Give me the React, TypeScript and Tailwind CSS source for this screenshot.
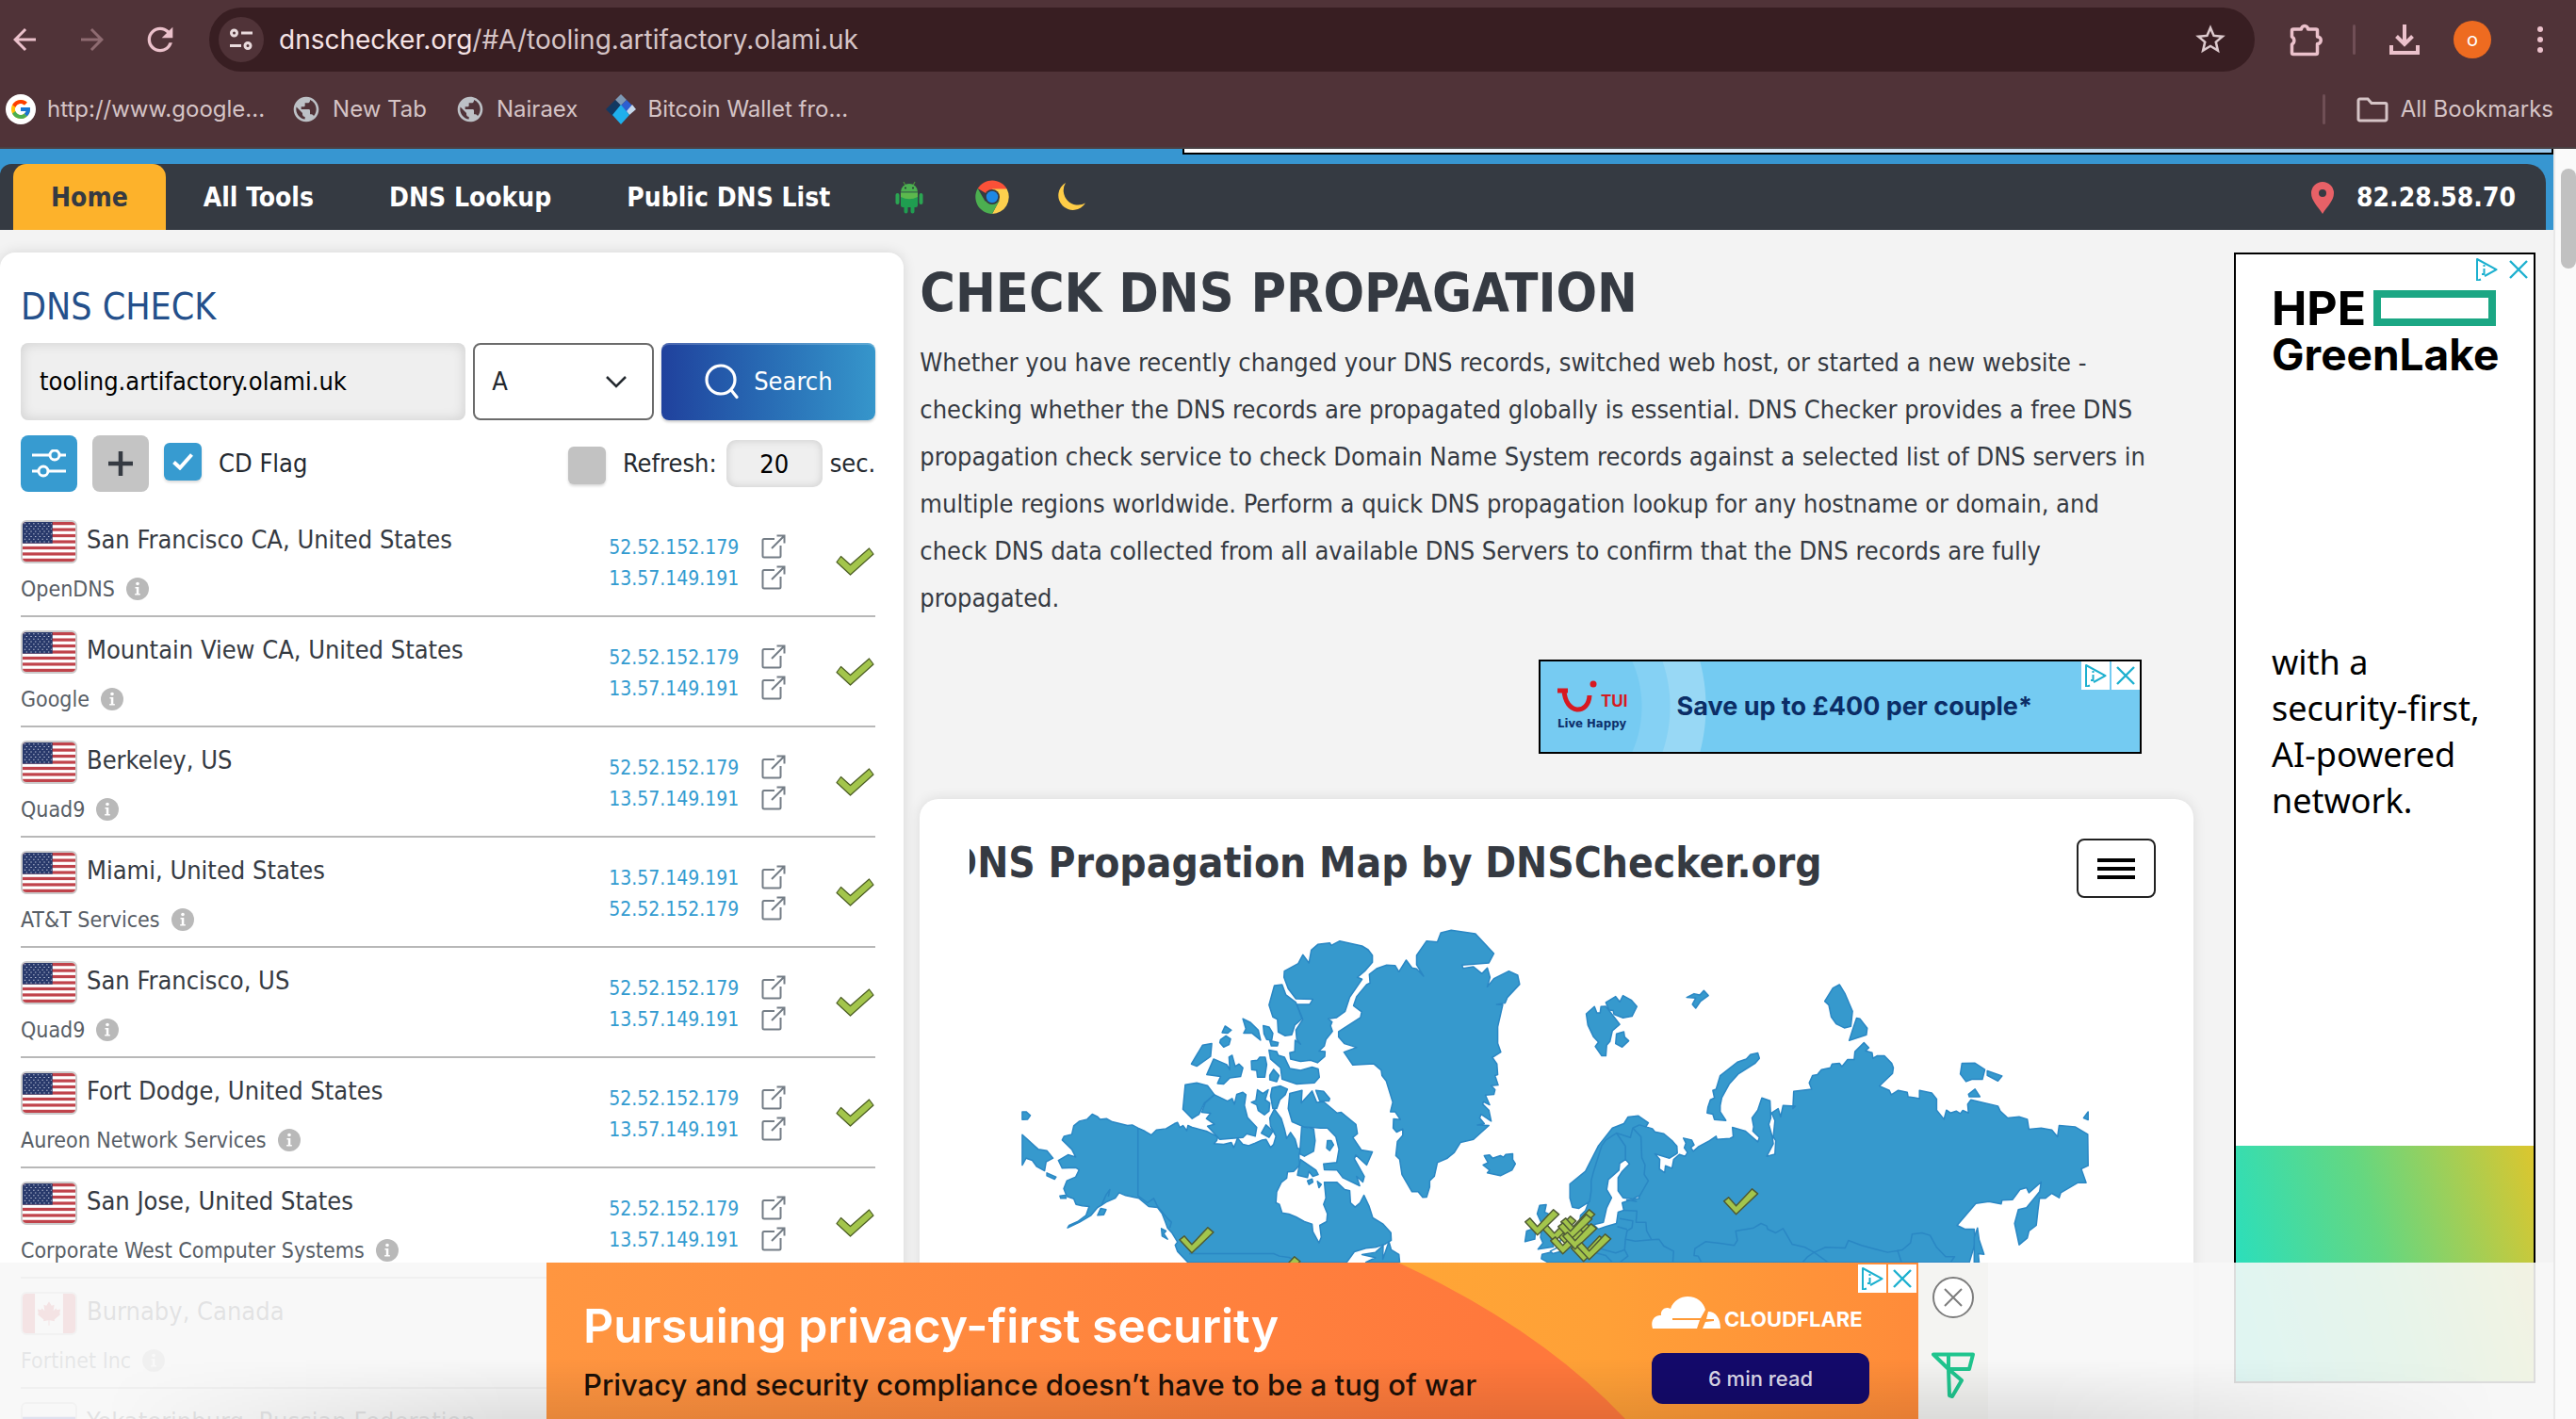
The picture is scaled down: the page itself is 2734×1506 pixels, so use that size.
import type { ReactNode } from 'react'
import { FcGoogle } from 'react-icons/fc'
import { MdArrowBack, MdArrowForward, MdPublic, MdRefresh, MdStarBorder } from 'react-icons/md'

/* ---------- shared icons ---------- */

function CheckMark() {
  return (
    <svg viewBox="-1 -1 43 32" className="h-8 w-[43px]" aria-label="Resolved">
      <path d="M1 15.5 5.5 9.5 15.5 18.5 35.5 1 40 7 15.5 29Z" fill="#a3c54c" stroke="#4b5d23" strokeWidth="1.2" strokeLinejoin="round" />
    </svg>
  )
}

function ExternalIcon() {
  return (
    <svg viewBox="0 0 26 26" className="size-[26px]" fill="none" stroke="#747d86" strokeWidth="2">
      <path d="M14 5H3a1.5 1.5 0 0 0-1.500 1.500V23A1.500 1.500 0 0 0 3 24.500h16A1.500 1.500 0 0 0 20.500 23V12" />
      <path d="M11 15 24.500 1.500M16.500 1.500h8v8" />
    </svg>
  )
}

function InfoIcon() {
  return (
    <svg viewBox="0 0 24 24" className="size-6">
      <circle cx="12" cy="12" r="12" fill="#b9b9b9" />
      <circle cx="12" cy="6.500" r="1.800" fill="#fff" />
      <path d="M9.500 10h3.800v7h1.500v1.500h-5.600V17h1.600v-5.500H9.500Z" fill="#fff" />
    </svg>
  )
}

function AdChoices({ boxed = false }: { boxed?: boolean }) {
  const box = boxed ? 'flex size-[30px] items-center justify-center bg-white' : 'flex size-8 items-center justify-center'
  return (
    <div className="flex gap-0.5">
      <button aria-label="Ad choices" className={box}>
        <svg viewBox="0 0 24 24" className="size-6" fill="none" stroke="#1cb0cf" strokeWidth="2" strokeLinejoin="round">
          <path d="M6 22.500 2 24V1l20.500 11.200L10 19" />
          <path d="M9.500 7v2M9.500 11v6H7" />
        </svg>
      </button>
      <button aria-label="Close ad" className={box}>
        <svg viewBox="0 0 20 20" className="size-5" stroke="#1cb0cf" strokeWidth="2.400">
          <path d="M1 1 19 19M19 1 1 19" />
        </svg>
      </button>
    </div>
  )
}

/* ---------- browser window ---------- */

function Bookmark({ icon, children }: { icon: ReactNode; children: ReactNode }) {
  return (
    <button className="flex items-center gap-3">
      {icon}
      <span>{children}</span>
    </button>
  )
}

function BrowserBar() {
  return (
    <header className="shrink-0 border-b-2 border-[#4a4043] bg-[#503338] font-['Inter',sans-serif] text-[#d5c4c6]">
      <div className="flex h-[84px] items-center pr-[26px] pl-2">
        <button aria-label="Back" className="text-[#ebc1cb]"><MdArrowBack className="size-9" /></button>
        <button aria-label="Forward" className="ml-9 text-[#8e6b71]"><MdArrowForward className="size-9" /></button>
        <button aria-label="Reload" className="ml-[34px] text-[#ebc1cb]"><MdRefresh className="size-10" /></button>
        <div className="ml-8 flex h-[68px] flex-1 items-center rounded-full bg-[#381e22] pr-7">
          <button aria-label="Site information" className="ml-2.5 flex size-12 items-center justify-center rounded-full bg-[#503338]">
            <svg viewBox="0 0 24 24" className="size-6" fill="none" stroke="#e8dadc" strokeWidth="3">
              <circle cx="4.500" cy="5" r="3" /><path d="M12 5h12M0 18.500h12" /><circle cx="19" cy="18.500" r="3" />
            </svg>
          </button>
          <p className="ml-4 flex-1 text-[28px]">
            <span className="text-[#f5e3e5]">dnschecker.org</span>/#A/tooling.artifactory.olami.uk
          </p>
          <button aria-label="Bookmark this page"><MdStarBorder className="size-[38px] text-[#dccacd]" /></button>
        </div>
        <button aria-label="Extensions" className="ml-9">
          <svg viewBox="0 0 36 36" className="size-9" fill="none" stroke="#ebc1cb" strokeWidth="3.500" strokeLinejoin="round">
            <path d="M5 7h8.500a3.500 3.500 0 0 1 7 0H29a1.500 1.500 0 0 1 1.500 1.500V15a3.500 3.500 0 0 1 0 7.500V32a1.500 1.500 0 0 1-1.500 1.500H5A1.500 1.500 0 0 1 3.500 32v-9a4.600 4.600 0 0 0 0-8V8.500A1.500 1.500 0 0 1 5 7Z" />
          </svg>
        </button>
        <span className="ml-8 h-8 w-[3px] rounded bg-[#704f56]" />
        <button aria-label="Downloads" className="ml-9">
          <svg viewBox="0 0 32 32" className="size-8" fill="none" stroke="#ebc1cb" strokeWidth="4">
            <path d="M16 0v20M7.500 12.500 16 21l8.500-8.500M2 22v8h28v-8" />
          </svg>
        </button>
        <button aria-label="Profile" className="ml-9 flex size-10 items-center justify-center rounded-full bg-[#ee6b20] text-xl text-white">o</button>
        <button aria-label="Menu" className="ml-10">
          <svg viewBox="0 0 24 32" className="h-8 w-6" fill="#ebc1cb">
            <circle cx="12" cy="5" r="3" /><circle cx="12" cy="16" r="3" /><circle cx="12" cy="27" r="3" />
          </svg>
        </button>
      </div>
      <nav aria-label="Bookmarks" className="flex h-[72px] items-start pt-4 pr-6 pl-1.5 text-2xl leading-8">
        <Bookmark icon={<span className="flex size-8 items-center justify-center rounded-full bg-white"><FcGoogle className="size-6" /></span>}>http://www.google...</Bookmark>
        <span className="w-7" />
        <Bookmark icon={<MdPublic className="size-8 text-[#bdc1c6]" />}>New Tab</Bookmark>
        <span className="w-[30px]" />
        <Bookmark icon={<MdPublic className="size-8 text-[#bdc1c6]" />}>Nairaex</Bookmark>
        <span className="w-[30px]" />
        <Bookmark
          icon={
            <svg viewBox="0 0 32 32" className="size-8">
              <path d="M16 0 22 6 16 12 10 6Z" fill="#7d99b5" />
              <path d="M10 6 16 12 8 24 0 16Z" fill="#123962" />
              <path d="M22 6 28 12 23 20 16 12Z" fill="#2d5fd0" />
              <path d="M28 11 32 16 25 22 22 18Z" fill="#c5d8ec" />
              <path d="M16 11 25 22 16 32 7 22Z" fill="#1fb0ec" />
            </svg>
          }
        >
          Bitcoin Wallet fro...
        </Bookmark>
        <span className="ml-auto h-8 w-[3px] rounded bg-[#6f4f55]" />
        <span className="w-8" />
        <Bookmark
          icon={
            <svg viewBox="0 0 36 32" className="h-8 w-9" fill="none" stroke="#d5c4c6" strokeWidth="3">
              <path d="M4.500 5H13l4 4.500h14.500a1.500 1.500 0 0 1 1.500 1.500v15.500a1.500 1.500 0 0 1-1.500 1.500h-27A1.500 1.500 0 0 1 3 26.500v-20A1.500 1.500 0 0 1 4.500 5Z" />
            </svg>
          }
        >
          All Bookmarks
        </Bookmark>
      </nav>
    </header>
  )
}

/* ---------- site header ---------- */

function AndroidIcon() {
  return (
    <svg viewBox="0 0 36 36" className="size-9">
      <path d="M12 2 14 6M24 2 22 6" stroke="#4b8f3c" strokeWidth="1.200" />
      <path d="M9 12.500a9 8.500 0 0 1 18 0Z" fill="#4caf50" />
      <circle cx="14" cy="8.500" r="1" fill="#263238" /><circle cx="22" cy="8.500" r="1" fill="#263238" />
      <rect x="3.500" y="14" width="4" height="12" rx="2" fill="#2ba552" />
      <rect x="28.500" y="14" width="4" height="12" rx="2" fill="#2ba552" />
      <path d="M9 13.500h18V27a2 2 0 0 1-2 2h-1.500v4.500a2 2 0 0 1-4 0V29h-3v4.500a2 2 0 0 1-4 0V29H11a2 2 0 0 1-2-2Z" fill="#1f9d50" />
      <path d="M9 13.500h18V18q-9 4.500-18 0Z" fill="#5cb84d" />
    </svg>
  )
}

function ChromeIcon() {
  return (
    <svg viewBox="0 0 36 36" className="size-9">
      <path d="M18 18 2.700 9A18 18 0 0 1 33.600 9.500Z" fill="#fb5138" />
      <path d="M18 9.500h15.600A18 18 0 0 1 18 36l7.500-14Z" fill="#fdd04e" />
      <path d="M2.700 9 10.500 22.500 25.500 22 18 36A18 18 0 0 1 2.700 9Z" fill="#4caf50" />
      <circle cx="18" cy="18" r="8" fill="#353a42" />
      <circle cx="18" cy="18" r="6.200" fill="#1e88e5" />
    </svg>
  )
}

function SiteNav() {
  const link = 'flex items-center px-10 pt-0.5'
  return (
    <div className="shrink-0 bg-[#3796d1]">
      <div className="flex h-4 justify-end">
        <div className="h-1.5 w-[1455px] border-x-2 border-b-2 border-black bg-linear-to-r from-white to-[#9cc9ec]" />
      </div>
      <nav className="mr-2 flex h-[70px] items-stretch rounded-tl-xl rounded-tr-[20px] bg-[#353a42] pl-3.5 text-[28px] font-bold text-white">
        <a href="#home" className="flex items-center rounded-t-[14px] bg-[#fdb22b] px-10 pt-0.5 text-[#353a42]">Home</a>
        <a href="#tools" className={link}>All Tools</a>
        <a href="#lookup" className={link}>DNS Lookup</a>
        <a href="#list" className={link}>Public DNS List</a>
        <a href="#android" aria-label="Android app" className="ml-[26px] flex items-center"><AndroidIcon /></a>
        <a href="#chrome" aria-label="Chrome extension" className="ml-[52px] flex items-center"><ChromeIcon /></a>
        <button aria-label="Dark mode" className="ml-[50px]">
          <svg viewBox="0 0 32 32" className="size-8"><path d="M10 1A15.500 15.500 0 1 0 31 22.500 15.500 15.500 0 0 1 10 1Z" fill="#ffcd47" /></svg>
        </button>
        <a href="#ip" className="mr-8 ml-auto flex items-center gap-6 pt-0.5">
          <svg viewBox="0 0 24 34" className="h-[34px] w-6"><path fillRule="evenodd" d="M12 0a12 12 0 0 1 12 12c0 8-7 14-12 22C7 26 0 20 0 12A12 12 0 0 1 12 0Zm0 8a4 4 0 1 0 0 8 4 4 0 0 0 0-8Z" fill="#e86167" /></svg>
          82.28.58.70
        </a>
      </nav>
    </div>
  )
}

/* ---------- DNS check panel ---------- */

type Server = { place: string; provider: string; ips: string[]; flag: 'us' | 'ca' | 'ru' }

const A = '52.52.152.179'
const B = '13.57.149.191'
const servers: Server[] = [
  { place: 'San Francisco CA, United States', provider: 'OpenDNS', ips: [A, B], flag: 'us' },
  { place: 'Mountain View CA, United States', provider: 'Google', ips: [A, B], flag: 'us' },
  { place: 'Berkeley, US', provider: 'Quad9', ips: [A, B], flag: 'us' },
  { place: 'Miami, United States', provider: 'AT&T Services', ips: [B, A], flag: 'us' },
  { place: 'San Francisco, US', provider: 'Quad9', ips: [A, B], flag: 'us' },
  { place: 'Fort Dodge, United States', provider: 'Aureon Network Services', ips: [A, B], flag: 'us' },
  { place: 'San Jose, United States', provider: 'Corporate West Computer Systems', ips: [A, B], flag: 'us' },
  { place: 'Burnaby, Canada', provider: 'Fortinet Inc', ips: [], flag: 'ca' },
  { place: 'Yekaterinburg, Russian Federation', provider: '', ips: [], flag: 'ru' },
]

const stripes = [0, 1, 2, 3, 4, 5, 6]
const starRows = [0, 1, 2, 3, 4, 5, 6, 7]

function Flag({ country }: { country: Server['flag'] }) {
  return (
    <svg viewBox="0 0 60 46" className="h-[46px] w-[60px] rounded-md border-2 border-[#cbcbcb] bg-white" preserveAspectRatio="none">
      {country === 'us' && (
        <>
          {stripes.map((i) => <rect key={i} x="0" y={i * 7.08} width="60" height="3.540" fill="#c0434b" />)}
          <rect width="34" height="24.800" fill="#28396b" />
          {starRows.map((r) => (
            <path key={r} d={`M${r % 2 ? 4 : 2} ${2 + r * 3}H33`} stroke="#c9cfe0" strokeWidth="1.200" strokeDasharray="1.400 3.600" />
          ))}
        </>
      )}
      {country === 'ca' && (
        <>
          <rect width="14" height="46" fill="#d9434b" /><rect x="46" width="14" height="46" fill="#d9434b" />
          <path d="M30 9l3 5 3-1-1 7 3-3 1 2 4-1-1 5 1 1-7 6 .500 2-6-1v6h-1v-6l-6 1 .500-2-7-6 1-1-1-5 4 1 1-2 3 3-1-7 3 1Z" fill="#d9434b" />
        </>
      )}
      {country === 'ru' && (
        <>
          <rect y="15" width="60" height="16" fill="#2a46b0" /><rect y="31" width="60" height="15" fill="#c8372d" />
        </>
      )}
    </svg>
  )
}

function ServerRow({ server }: { server: Server }) {
  const cell = 'h-[117px] border-b-2 border-[#b8b8b8] p-0 align-top'
  return (
    <tr>
      <td className="h-[117px] w-full border-b-2 border-[#b8b8b8] p-0 align-top">
        <div className="flex gap-2.5 pt-3.5">
          <Flag country={server.flag} />
          <span className="text-[27px] leading-[42px] whitespace-nowrap text-[#353a42]">{server.place}</span>
        </div>
        {server.provider && (
          <div className="mt-3 flex items-center gap-3 text-[23px] leading-[30px] text-[#585e66]">
            {server.provider}
            <InfoIcon />
          </div>
        )}
      </td>
      <td className={cell}>
        <ul className="flex w-[190px] flex-col pt-[27px]">
          {server.ips.map((ip) => (
            <li key={ip} className="flex h-[33px] items-center justify-end gap-6 text-[21px]">
              <a href={`#${ip}`} className="text-[#339bd0]">{ip}</a>
              <a href={`#open-${ip}`} aria-label={`Open ${ip}`} className="pb-1"><ExternalIcon /></a>
            </li>
          ))}
        </ul>
      </td>
      <td className={cell}>
        <div className="flex w-[95px] justify-end pt-[42px]">{server.ips.length > 0 && <CheckMark />}</div>
      </td>
    </tr>
  )
}

function CheckPanel() {
  return (
    <section className="w-[35.4%] shrink-0 rounded-t-2xl bg-white pt-8 pr-[30px] pl-[22px] shadow-[0_0_14px_rgba(0,0,0,0.12)]">
      <h2 className="text-[39px] leading-[52px] text-[#24508b]">DNS CHECK</h2>
      <form className="mt-3 flex h-[82px] gap-2 text-[27px]" onSubmit={(e) => e.preventDefault()}>
        <input aria-label="Domain" defaultValue="tooling.artifactory.olami.uk" className="min-w-0 flex-1 rounded-lg bg-[#efefef] px-5 text-black shadow-[inset_0_0_14px_rgba(0,0,0,0.14)]" />
        <div className="relative w-48">
          <select aria-label="Record type" className="size-full appearance-none rounded-lg border-2 border-[#6b6b6b] bg-white pl-[18px] text-[#24292f]">
            <option>A</option>
            <option>AAAA</option>
            <option>CNAME</option>
            <option>MX</option>
          </select>
          <svg viewBox="0 0 24 14" className="pointer-events-none absolute top-[34px] right-[28px] h-3.5 w-6" fill="none" stroke="#24292f" strokeWidth="2.500"><path d="M2 2 12 12 22 2" /></svg>
        </div>
        <button className="flex w-[227px] items-center justify-center gap-4 rounded-lg bg-linear-to-r from-[#20419d] to-[#3696cb] text-white shadow-[inset_0_2px_0_rgba(255,255,255,0.200),0_2px_3px_rgba(0,0,0,0.200)]">
          <svg viewBox="0 0 36 38" className="h-[38px] w-9" fill="none" stroke="#fff" strokeWidth="3.200" strokeLinecap="round"><circle cx="17" cy="17" r="15" /><path d="M28 28 34 35.500" /></svg>
          Search
        </button>
      </form>
      <div className="mt-4 flex h-[60px] items-center text-[27px] text-[#24292f]">
        <button aria-label="Filters" className="flex size-[60px] items-center justify-center rounded-lg bg-[#379bd0]">
          <svg viewBox="0 0 36 30" className="h-[30px] w-9" fill="none" stroke="#fff" strokeWidth="3"><path d="M0 6h18M30 6h6M0 23h6M18 23h18" /><circle cx="24" cy="6" r="5" /><circle cx="12" cy="23" r="5" /></svg>
        </button>
        <button aria-label="Add server" className="ml-4 flex size-[60px] items-center justify-center rounded-lg bg-[#c4c4c4]">
          <svg viewBox="0 0 26 26" className="size-[26px]" stroke="#353a42" strokeWidth="4.500"><path d="M13 0v26M0 13h26" /></svg>
        </button>
        <label className="ml-4 flex items-center gap-[18px]">
          <span className="relative mb-1 flex size-10">
            <input type="checkbox" defaultChecked className="size-10 appearance-none rounded-md bg-[#379bd0] shadow-[0_2px_3px_rgba(0,0,0,0.150)]" />
            <svg viewBox="0 0 22 18" className="pointer-events-none absolute top-[11px] left-[9px] h-[18px] w-[22px]" fill="none" stroke="#fff" strokeWidth="4"><path d="M1.500 9.500 8 15.500 20.500 1.500" /></svg>
          </span>
          CD Flag
        </label>
        <label className="ml-auto flex items-center gap-[18px]">
          <input type="checkbox" className="mt-1 size-10 appearance-none rounded-md bg-[#c2c2c2] shadow-[0_2px_3px_rgba(0,0,0,0.150)]" />
          Refresh:
        </label>
        <input aria-label="Refresh seconds" defaultValue="20" className="ml-2.5 h-[50px] w-[102px] rounded-[10px] bg-[#efefef] text-center text-black shadow-[inset_0_0_10px_rgba(0,0,0,0.150)]" />
        <span className="ml-2">sec.</span>
      </div>
      <table className="mt-4 w-full border-separate border-spacing-0">
        <tbody>
          {servers.map((s) => <ServerRow key={s.place} server={s} />)}
        </tbody>
      </table>
    </section>
  )
}

/* ---------- map ---------- */

const west = [
  'M248 668 262 676 268 684 285 682 300 692 340 704 352 702 367 712 385 722 402 734 415 718 440 714 462 698 470 694 476 710 484 704 494 720 497 704 508 710 545 722 562 732 575 740 572 752 565 762 590 764 610 758 616 774 622 758 626 744 640 764 655 768 672 760 690 750 700 748 712 774 720 764 726 738 712 706 710 680 722 652 740 682 748 714 754 745 764 726 776 748 782 776 790 780 786 800 788 830 772 850 756 852 754 872 740 885 728 915 726 950 735 955 742 982 760 986 778 995 800 1010 820 1018 822 1042 838 1078 844 1060 840 1022 858 1010 860 985 850 955 856 935 852 885 885 885 905 908 918 912 920 950 932 964 945 950 955 926 968 960 978 998 1005 1018 1025 1045 1026 1070 1010 1082 985 1092 960 1095 930 1106 910 1140 497 1140 470 1105 464 1085 470 1075 455 1045 444 1030 438 1010 430 985 418 965 395 962 370 936 355 932 335 927 318 918 308 935 284 948 272 958 262 965 245 990 215 1012 184 1030 188 1022 210 1010 232 990 240 962 222 960 206 955 200 937 182 930 174 905 182 880 205 868 214 845 205 838 170 840 160 815 185 797 205 804 195 780 170 750 175 738 195 732 200 705 215 690 235 684Z',
  'M1155 90 1182 82 1245 93 1293 156 1280 186 1210 193 1213 203 1240 198 1262 220 1276 202 1283 232 1276 262 1293 236 1332 212 1355 225 1360 254 1328 296 1322 314 1300 318 1316 320 1303 390 1303 442 1311 470 1289 487 1301 508 1303 542 1296 545 1304 575 1286 577 1296 590 1293 605 1271 607 1282 638 1266 628 1264 636 1280 655 1286 690 1260 668 1256 680 1268 698 1250 702 1280 704 1240 748 1206 758 1190 790 1172 808 1146 822 1138 866 1126 880 1126 900 1118 932 1108 933 1096 915 1080 915 1054 860 1048 812 1038 800 1042 755 1056 735 1056 715 1040 725 1031 712 1032 683 1050 685 1036 660 1024 660 1030 630 1013 562 1002 545 1000 528 980 507 926 511 903 470 936 455 904 443 889 422 889 405 946 360 949 342 928 322 936 293 962 255 971 250 969 222 988 204 1014 193 1036 194 1046 214 1065 177 1080 202 1092 205 1110 228 1092 192 1092 162 1118 116 1146 119Z',
  'M892 116 950 132 966 144 977 162 977 184 957 212 938 232 950 238 918 295 906 340 884 360 862 364 872 374 868 386 873 404 856 430 852 450 838 467 854 468 853 484 834 504 816 496 790 500 764 492 762 472 775 468 776 432 790 445 780 428 778 400 796 366 780 318 814 318 822 302 778 300 758 268 747 232 748 212 784 188 796 160 812 186 818 145 835 127 866 122 870 130Z',
  'M722 258 742 255 752 288 778 312 794 364 775 384 767 415 750 418 732 406 730 366 718 358 708 320Z',
  'M640 364 660 376 680 400 686 432 664 410 642 410 648 396Z',
  'M693 386 708 390 718 410 715 432 702 430 695 412Z',
  'M710 434 732 440 730 450 714 450Z',
  'M594 387 610 400 600 410 586 408Z',
  'M582 430 596 418 608 428 604 446 590 454 580 440Z',
  'M535 448 559 443 556 484 520 515 506 508Z',
  'M564 492 598 510 606 526 604 486 612 480 620 516 630 508 640 520 634 548 606 552 590 572 574 570 582 548 546 542Z',
  'M662 498 678 496 684 486 698 486 702 510 697 550 678 550 676 528 663 526Z',
  'M708 464 728 468 732 480 748 486 762 522 790 528 820 518 836 524 839 550 826 568 780 572 742 556 738 520 712 492Z',
  'M720 525 734 545 728 564 710 558 710 544Z',
  'M490 574 520 568 548 577 566 606 540 632 526 668 508 682 484 652Z',
  'M566 606 580 614 600 626 612 618 618 636 624 605 640 598 648 606 644 640 652 678 676 710 672 738 650 730 640 742 580 748 548 706 566 700 545 682 556 665 533 662 542 632Z',
  'M678 590 692 602 706 590 698 622 710 632 708 658 696 670 680 656 676 638 662 630 674 624Z',
  'M716 584 738 578 756 588 750 606 736 622 728 650 718 650 712 610Z',
  'M762 602 794 592 792 632 820 594 832 630 850 628 885 664 896 662 934 700 938 730 926 742 948 782 977 788 962 830 934 798 930 810 956 866 952 884 936 866 944 896 900 870 885 846 852 845 850 826 884 822 890 780 882 740 860 712 842 712 798 708 768 692 758 650Z',
  'M830 592 850 595 866 618 864 626 840 625Z',
  'M793 708 824 714 828 752 824 786 800 802 788 794Z',
  'M688 728 700 702 718 722 708 742Z',
  'M860 752 870 752 876 766 866 784 858 776Z',
  'M790 812 830 846 836 860 822 866 812 850 808 870 782 862Z',
  'M808 880 820 874 822 884 812 892Z',
  'M834 882 844 892 838 902Z',
  'M66 660 76 660 87 672 80 684 66 685Z',
  'M66 733 108 780 130 784 146 808 128 820 124 848 104 835 92 815 76 808 66 830Z',
  'M130 855 154 868 150 875 130 864Z',
  'M270 968 284 972 278 988 262 990Z',
  'M164 928 178 926 180 936 166 936Z',
  'M428 1032 440 1040 434 1048 444 1066 430 1056Z',
  'M960 1140 985 1125 950 1115 985 1108 1005 1086 1004 1130 1020 1074 1026 1100 1046 1115 1048 1140Z',
  'M1268 800 1282 798 1290 808 1310 800 1318 805 1324 796 1342 794 1342 812 1349 826 1340 846 1310 864 1276 855 1282 846 1265 830 1278 822Z',
]
const westBorders = ['M367 712V928L392 950 408 936 418 962 444 1000 454 1012 450 1030', 'M500 1112H720L735 1120 760 1124 785 1140', 'M272 958 284 925 294 908 290 930']

const east = [
  'M300 677 325 673 350 695 344 708 360 714 366 724 388 730 408 752 420 770 421 792 402 808 366 794 378 812 377 842 390 854 392 832 408 840 412 812 426 796 440 802 446 790 438 775 442 760 436 744 456 750 462 766 454 774 460 786 472 772 500 752 516 738 518 748 550 745 558 740 556 710 588 722 618 756 622 742 606 722 608 708 604 680 618 655 628 616 648 625 650 680 645 700 654 742 656 762 640 802 660 795 662 752 656 740 660 688 652 664 668 650 674 676 680 640 710 642 704 650 706 595 750 588 744 568 752 545 764 542 774 526 796 520 800 508 818 506 824 516 838 494 854 494 856 468 878 440 890 456 882 466 898 472 900 490 910 482 928 482 946 506 950 520 948 538 916 578 940 592 945 606 962 592 984 598 986 612 1014 618 1014 592 1044 600 1056 620 1056 655 1074 684 1080 655 1090 664 1104 658 1114 666 1120 656 1134 664 1132 636 1140 622 1206 642 1212 658 1230 680 1258 676 1278 684 1282 716 1312 712 1338 718 1352 740 1356 704 1395 708 1426 732 1427 832 1410 842 1422 886 1402 886 1360 918 1356 934 1338 920 1322 936 1308 935 1304 975 1300 1022 1282 1040 1278 1062 1258 1084 1247 1016 1256 972 1276 966 1308 915 1312 884 1282 918 1276 902 1260 908 1242 940 1216 942 1214 954 1184 946 1152 952 1106 1022 1125 1034 1148 1034 1150 1080 1136 1140 104 1140 88 1128 90 1114 116 1106 140 1090 160 1080 180 1030 184 990 196 975 204 948 180 968 164 964 158 935 158 890 196 850 228 768 262 712 290 698Z',
  'M100 956 96 980 105 985 100 1010 110 1060 118 1090 80 1098 92 1078 86 1060 90 1020 78 985 84 958Z',
  'M52 1040 74 1030 72 1066 48 1074Z',
  'M1156 1030 1160 1068 1172 1114 1158 1112 1160 1140 1148 1140 1148 1060Z',
  'M218 325 224 345 232 345 234 325 246 324 280 382 262 402 256 436 248 448 246 482 236 482 220 452 228 438 216 422 202 384 198 348Z',
  'M246 312 270 293 280 310 288 290 308 304 322 325 310 356 288 361 266 350 264 338 254 336Z',
  'M272 412 290 405 292 422 302 434 286 454 270 443Z',
  'M444 296 462 284 476 288 486 274 497 290 478 308 466 330 458 318 466 298Z',
  'M600 478 618 473 622 490 612 505 570 540 548 572 530 615 526 640 526 660 540 688 512 685 508 668 494 664 496 645 502 622 512 616 508 592 516 588 526 545 568 502 590 492Z',
  'M818 255 832 285 850 340 846 388 830 393 810 380 798 358 792 320 782 308 802 266Z',
  'M860 362 868 364 886 394 884 415 842 433 850 400Z',
  'M1118 506 1150 505 1174 526 1168 557 1142 557 1128 564 1114 540Z',
  'M1180 530 1216 546 1206 562 1180 544Z',
  'M1134 604 1150 588 1162 612 1136 612Z',
  'M1427 660 1416 680 1427 686Z',
]
const gulfs = ['M294 812 304 826 286 850 276 870 276 912 288 934 312 938 326 928 328 936 300 944 286 950 290 974 276 980 272 1016 246 1026 228 1034 216 1020 240 1012 248 966 260 934 248 908 252 876 278 846 280 824Z', 'M136 1060 160 1042 166 1056 150 1100 116 1112 110 1104 132 1090Z']
const eastBorders = [
  'M344 708 328 702 312 712 306 742 272 728 246 750 236 768 216 850 210 880 210 912 206 948',
  'M272 728 294 770 294 812M312 712 332 740 334 806 342 830 340 860 350 880 328 930',
  'M296 940 322 946M290 974 322 976 320 1012 344 1012 346 1040 358 1068 318 1072 294 1066 298 1040 310 1030 312 1008 280 1000M298 1035 274 1026M358 1068 376 1066 388 1088 412 1104 410 1140M294 1066 292 1100 270 1110 236 1098 222 1085M292 1100 300 1120 280 1140M222 1110 246 1118 262 1140',
  'M480 1140 472 1120 462 1118 464 1096 490 1074 530 1080 560 1086 568 1070 564 1040 608 1030 626 1016 640 1024 642 1034 662 1046 680 1032 702 1082 734 1092 756 1108 740 1122 728 1140',
  'M756 1108 784 1092 832 1094 840 1070 872 1086 906 1098 936 1108 972 1100 992 1078 996 1050 1020 1046 1040 1054 1056 1092 1078 1122 1100 1122 1090 1140M756 1108 790 1140M960 1100 970 1140',
]

/* Tip of each marker, in map units. */
const markers: [number, number][] = [
  [1267, 1330], [1359, 1361], [1667, 1324], [1652, 1318], [1672, 1311], [1683, 1339], [1661, 1331], [1634, 1311], [1669, 1316], [1674, 1326], [1689, 1337], [1845, 1289],
]

function PropagationMap() {
  return (
    <svg viewBox="1086 985 1136 355" className="mt-8 ml-[8%] block w-[84%]" aria-label="Map of DNS servers" fill="#3699cd" stroke="#2a87c4" strokeWidth="1.500" strokeLinejoin="round">
      <g transform="translate(1060 960) scale(0.40816 0.33333)">
        {west.map((d) => <path key={d} d={d} vectorEffect="non-scaling-stroke" />)}
        {westBorders.map((d) => <path key={d} d={d} fill="none" vectorEffect="non-scaling-stroke" />)}
      </g>
      <g transform="translate(1600 960) scale(0.43367 0.33333)">
        {east.map((d) => <path key={d} d={d} vectorEffect="non-scaling-stroke" />)}
        {gulfs.map((d) => <path key={d} d={d} fill="#fff" vectorEffect="non-scaling-stroke" />)}
        {eastBorders.map((d) => <path key={d} d={d} fill="none" vectorEffect="non-scaling-stroke" />)}
      </g>
      {markers.map(([x, y]) => (
        <path key={`${x}-${y}`} d={`M${x} ${y}l-13-14 5-4 8 9 17-18 6 5Z`} fill="#a3c54c" stroke="#4f5b35" />
      ))}
    </svg>
  )
}

function TuiAd() {
  return (
    <aside className="mt-10 mr-[55px] flex h-[100px] w-[640px] shrink-0 items-stretch self-end overflow-hidden border-2 border-black bg-[radial-gradient(circle_at_-12px_50%,#76cbf2_0_119px,#85d1f4_120px_149px,#98d8f5_150px_187px,#74cbf2_188px)]">
      <div className="ml-[18px] flex flex-col pt-5">
        <div className="flex items-end gap-1">
          <svg viewBox="0 0 42 34" className="h-[34px] w-[42px]" fill="none" stroke="#d71921" strokeWidth="5">
            <path d="M0 11h11" /><path d="M7 10c1 27 26 27 27 6" /><circle cx="38" cy="4" r="3.500" fill="#d71921" stroke="none" />
          </svg>
          <span className="font-['Inter',sans-serif] text-[17px] leading-6 font-bold text-[#d71921]">TUI</span>
        </div>
        <span className="text-[13px] leading-6 font-bold text-[#0d2f6b]">Live Happy</span>
      </div>
      <p className="ml-[52px] self-center font-['Inter',sans-serif] text-[27px] font-bold text-[#0b2d66]">Save up to £400 per couple*</p>
      <div className="ml-auto"><AdChoices boxed /></div>
    </aside>
  )
}

function MainColumn() {
  return (
    <main className="ml-[17px] flex min-w-0 flex-1 flex-col text-[#353a42]">
      <h1 className="mt-3 text-[57px] leading-[62px] font-bold">CHECK DNS PROPAGATION</h1>
      <p className="mt-[18px] pr-6 text-[27px] leading-[50px]">
        Whether you have recently changed your DNS records, switched web host, or started a new website - checking whether the DNS records are propagated globally is essential. DNS Checker provides a free DNS propagation check service to check Domain Name System records against a selected list of DNS servers in multiple regions worldwide. Perform a quick DNS propagation lookup for any hostname or domain, and check DNS data collected from all available DNS Servers to confirm that the DNS records are fully propagated.
      </p>
      <TuiAd />
      <section className="mt-12 min-h-[680px] rounded-[20px] bg-white pt-[42px] shadow-[0_0_14px_rgba(0,0,0,0.100)]">
        <div className="flex items-start justify-between pr-10 pl-[53px]">
          <div className="overflow-hidden">
            <h2 className="-ml-[25px] text-[44px] leading-[52px] font-bold whitespace-nowrap">DNS Propagation Map by DNSChecker.org</h2>
          </div>
          <button aria-label="Map menu" className="flex h-[63px] w-[84px] flex-col items-center justify-center gap-[5px] rounded-lg border-2 border-[#222] bg-white">
            <span className="h-1 w-10 bg-black" /><span className="h-1 w-10 bg-black" /><span className="h-1 w-10 bg-black" />
          </button>
        </div>
        <PropagationMap />
      </section>
    </main>
  )
}

function HpeAd() {
  return (
    <aside className="mr-[19px] ml-[43px] flex h-[1200px] w-80 shrink-0 flex-col border-2 border-black bg-white text-black">
      <div className="flex justify-end"><AdChoices /></div>
      <div className="pl-[38px] font-['Inter',sans-serif] font-bold">
        <div className="flex items-center gap-2 pt-1">
          <span className="text-[50px] leading-[42px]">HPE</span>
          <span className="h-[38px] w-[130px] border-8 border-[#1ba784]" />
        </div>
        <div className="mt-1.5 text-[46px] leading-[44px]">GreenLake</div>
      </div>
      <p className="mt-[280px] pl-[38px] font-['Noto_Sans',sans-serif] text-[36px] leading-[49px]">
        with a<br />security-first,<br />AI-powered<br />network.
      </p>
      <div className="mt-auto h-[250px] bg-linear-[75deg,#1fe0c8,#65d780_50%,#dcc62e]" />
    </aside>
  )
}

/* ---------- sticky banner ---------- */

function BottomBanner() {
  return (
    <div className="fixed right-6 bottom-0 left-0 flex h-[166px] justify-center bg-[#f7f7f7]/89 pr-5 font-['Inter',sans-serif]">
      <aside className="relative flex w-[1456px] justify-between overflow-hidden bg-linear-to-r from-[#ff9640] to-[#ff783c] to-70%">
        <svg viewBox="0 0 1456 166" className="absolute inset-0 size-full">
          <defs>
            <linearGradient id="sun" x1="0" x2="1"><stop offset="0" stopColor="#ffa636" /><stop offset="0.400" stopColor="#ffa037" /><stop offset="1" stopColor="#ff8b3a" /></linearGradient>
          </defs>
          <path d="M904 0Q1055 70 1145 166H1456V0Z" fill="url(#sun)" />
        </svg>
        <div className="relative pt-[34px] pl-[39px]">
          <p className="text-[50px] leading-[66px] font-semibold text-white">Pursuing privacy-first security</p>
          <p className="text-[31px] leading-[60px] font-medium text-[#1c1008]">Privacy and security compliance doesn’t have to be a tug of war</p>
        </div>
        <div className="relative flex flex-col pt-[34px] pr-[52px]">
          <div className="flex h-9 items-end gap-1 text-white">
            <svg viewBox="0 0 73 34" className="h-[34px] w-[73px]" fill="#fff">
              <path d="M1 34c-3-9 3-15 9-14-1-6 5-10 10-7C23 4 31 0 38 0c10 0 17 6 19 14l-5 9H22v2h29l-3 9Z" />
              <path d="M54 34l3-7 9-1v-2h-8l2-8c8 0 13 7 13 18Z" />
            </svg>
            <span className="text-[22px] leading-5 font-bold">CLOUDFLARE</span>
          </div>
          <button className="mt-[26px] h-[54px] w-[231px] rounded-xl bg-[#140a6b] text-[22px] font-medium text-[#dcd9ea]">6 min read</button>
        </div>
        <div className="absolute top-0.5 right-0.5"><AdChoices boxed /></div>
      </aside>
      <div className="flex w-[74px] flex-col items-center bg-[#f4f4f2] pt-[15px]">
        <button aria-label="Close banner">
          <svg viewBox="0 0 44 44" className="size-11" fill="#fff" stroke="#7d7d7d" strokeWidth="2"><circle cx="22" cy="22" r="21" /><path d="M13 13 31 31M31 13 13 31" /></svg>
        </button>
        <svg viewBox="0 0 46 50" className="mt-9 h-[50px] w-[46px]" fill="none" stroke="#1fc58e" strokeWidth="4" strokeLinejoin="round">
          <path d="M2 2.500H44L40 18H18ZM2 2.500 20 20M18 2.500V18M18 18 32 30 22 47 19 46Z" />
        </svg>
      </div>
      <div className="pointer-events-none absolute inset-x-0 bottom-0 h-16 bg-linear-to-t from-black/10 to-transparent mask-[linear-gradient(to_right,transparent_4%,black_20%,black_80%,transparent_98%)]" />
    </div>
  )
}

export default function App() {
  return (
    <div className="flex h-screen flex-col overflow-hidden bg-[#f3f3f3] font-['DejaVu_Sans_Condensed','DejaVu_Sans',sans-serif]">
      <BrowserBar />
      <div className="flex min-h-0 flex-1">
        <div className="flex min-w-0 flex-1 flex-col overflow-hidden">
          <SiteNav />
          <div className="flex min-h-0 flex-1 pt-6">
            <CheckPanel />
            <MainColumn />
            <HpeAd />
          </div>
        </div>
        <div className="w-6 shrink-0 border-l-2 border-[#e8e8e8] bg-[#fafafa] pt-[21px] pl-1.5">
          <div className="h-[106px] rounded-full bg-[#c1c1c1]" />
        </div>
      </div>
      <BottomBanner />
    </div>
  )
}
